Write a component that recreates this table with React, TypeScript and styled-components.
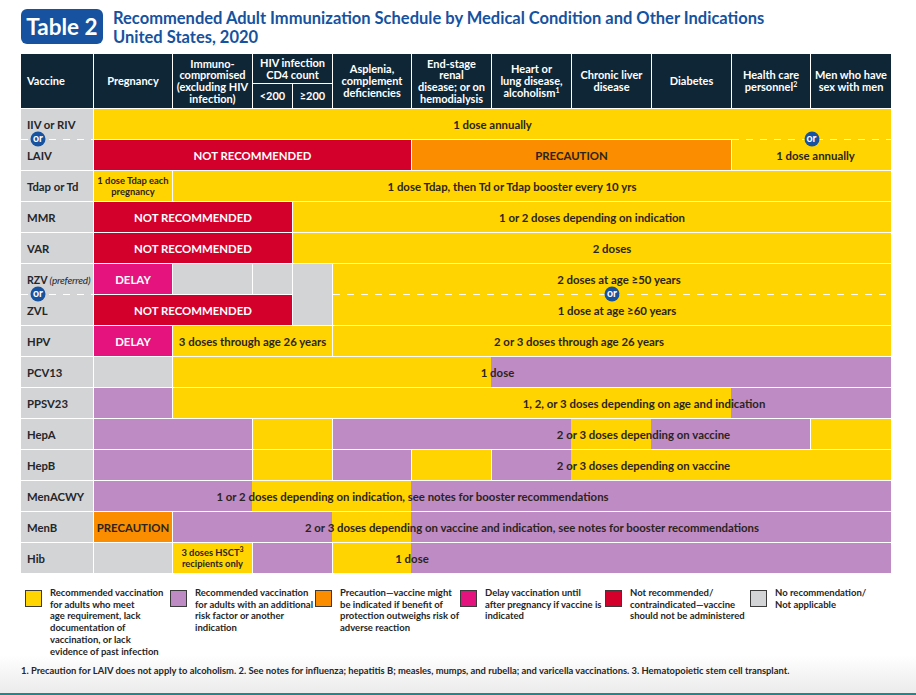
import React from 'react';
import styled, {createGlobalStyle} from 'styled-components';

type Tone = 'y' | 'p' | 'o' | 'r' | 'm' | 'g';

const tones: Record<Tone, string> = {
    y: '#ffd400',
    p: '#bf8bc5',
    o: '#fb8d00',
    r: '#d3002b',
    m: '#e4137d',
    g: '#d3d4d6'
};

const BLUE = '#1652a0';
const HEAD = '#0f2636';
const INK = '#2b241c';

const GlobalStyle = createGlobalStyle`
  html, body {
    margin: 0;
    padding: 0;
    background: #fff;
  }
  body {
    font-family: Lato, "Open Sans", sans-serif;
  }
  sup {
    font-size: 7px;
    line-height: 0;
    vertical-align: 4px;
  }
`;

const Page = styled.div`
  width: 916px;
  height: 695px;
  box-sizing: border-box;
  padding: 9px 25px 0 21px;
  display: flex;
  flex-direction: column;
  background: linear-gradient(to bottom, #fff 0, #fff 655px, #ebebeb 693px);
  border-bottom: 2px solid #1b8a8e;
`;

const TitleRow = styled.header`
  display: flex;
  align-items: flex-start;
  gap: 10px;
`;

const TableBadge = styled.div`
  width: 82px;
  height: 35px;
  border-radius: 6px;
  background: ${BLUE};
  color: #fff;
  font-weight: 700;
  font-size: 22.5px;
  display: flex;
  align-items: center;
  justify-content: center;
`;

const TitleText = styled.h1`
  margin: 0;
  color: ${BLUE};
  font-size: 16.5px;
  line-height: 19px;
  font-weight: 700;
`;

const Grid = styled.div`
  margin-top: 7px;
  display: grid;
  grid-template-columns: 72px 78px 79px 39px 39px 78px 79px 79px 79px 79px 78px 80px;
  grid-template-rows: 29px 24px repeat(15, 30px);
  gap: 1px;
  background: #fff;
  width: 870px;
`;

const Head = styled.div<{$col: string; $row: string; $left?: boolean}>`
  grid-column: ${p => p.$col};
  grid-row: ${p => p.$row};
  background: ${HEAD};
  color: #fff;
  font-weight: 700;
  font-size: 11px;
  line-height: 11.7px;
  display: flex;
  align-items: center;
  justify-content: ${p => (p.$left ? 'flex-start' : 'center')};
  text-align: ${p => (p.$left ? 'left' : 'center')};
  padding-left: ${p => (p.$left ? '6px' : '0')};
  white-space: nowrap;
`;

const Vaccine = styled.div<{$row: string}>`
  grid-column: 1 / 2;
  grid-row: ${p => p.$row};
  background: ${tones.g};
  color: #24262b;
  font-weight: 700;
  font-size: 11.3px;
  display: flex;
  align-items: center;
  padding-left: 6px;
  white-space: nowrap;
`;

const Small = styled.span`
  font-size: 10.6px;

  i {
    font-size: 10px;
    font-weight: 400;
    margin-left: 2px;
    letter-spacing: -0.2px;
  }
`;

const Cell = styled.div<{$tone: Tone; $col: string; $row: string; $join?: boolean; $pl?: number; $pr?: number; $small?: boolean}>`
  grid-column: ${p => p.$col};
  grid-row: ${p => p.$row};
  margin-left: ${p => (p.$join ? '-1px' : '0')};
  background: ${p => tones[p.$tone]};
  color: ${p => (p.$tone === 'r' || p.$tone === 'm' ? '#fff' : INK)};
  font-weight: 700;
  font-size: ${p => (p.$small ? '9.4px' : '11.4px')};
  line-height: ${p => (p.$small ? '11px' : '13px')};
  display: flex;
  align-items: center;
  justify-content: center;
  text-align: center;
  padding-left: ${p => p.$pl ?? 0}px;
  padding-right: ${p => p.$pr ?? 0}px;
  white-space: nowrap;
`;

const Label = styled.div<{$col: string; $row: string; $pl?: number; $pr?: number}>`
  grid-column: ${p => p.$col};
  grid-row: ${p => p.$row};
  z-index: 2;
  display: flex;
  align-items: center;
  justify-content: center;
  padding-left: ${p => p.$pl ?? 0}px;
  padding-right: ${p => p.$pr ?? 0}px;
  color: ${INK};
  font-weight: 700;
  font-size: 11.4px;
  white-space: nowrap;
  pointer-events: none;
`;

// dashed white rule laid over the 1px gap between two rows that read as one cell
const Divider = styled.div<{$tone: Tone; $col: string; $row: string; $badgeLeft?: boolean}>`
  grid-column: ${p => p.$col};
  grid-row: ${p => p.$row};
  align-self: start;
  margin-top: -1px;
  height: 1px;
  position: relative;
  z-index: 3;
  background: repeating-linear-gradient(90deg, #fff 0 7px, ${p => tones[p.$tone]} 7px 14px);

  &::after {
    content: 'or';
    position: absolute;
    top: 0;
    left: ${p => (p.$badgeLeft ? '17px' : '50%')};
    transform: translate(-50%, -50%);
    width: 15px;
    height: 15px;
    border-radius: 50%;
    background: ${BLUE};
    color: #fff;
    font-size: 10.5px;
    font-weight: 700;
    line-height: 13px;
    text-align: center;
  }
`;

const Legend = styled.div`
  margin-top: 17px;
  padding-left: 4px;
  display: grid;
  grid-template-columns: repeat(6, 145px);
`;

const LegendItem = styled.div`
  display: flex;
  align-items: flex-start;
  gap: 8px;
`;

const Swatch = styled.span<{$tone: Tone}>`
  flex: none;
  width: 15px;
  height: 15px;
  border: 1px solid #3b3b3b;
  background: ${p => tones[p.$tone]};
`;

const LegendText = styled.div`
  color: #262626;
  font-size: 9.5px;
  line-height: 11.7px;
  font-weight: 700;
  margin-top: -3px;
  white-space: nowrap;
`;

const Footnote = styled.p`
  margin: 8px 0 0 0;
  color: #262626;
  font-size: 9.4px;
  font-weight: 700;
  white-space: nowrap;
`;

const headers: {col: string; row: string; text: React.ReactNode; left?: boolean}[] = [
    {col: '1 / 2', row: '1 / 3', text: 'Vaccine', left: true},
    {col: '2 / 3', row: '1 / 3', text: 'Pregnancy'},
    {col: '3 / 4', row: '1 / 3', text: <>Immuno-<br/>compromised<br/>(excluding HIV<br/>infection)</>},
    {col: '4 / 6', row: '1 / 2', text: <>HIV infection<br/>CD4 count</>},
    {col: '4 / 5', row: '2 / 3', text: '<200'},
    {col: '5 / 6', row: '2 / 3', text: '≥200'},
    {col: '6 / 7', row: '1 / 3', text: <>Asplenia,<br/>complement<br/>deficiencies</>},
    {col: '7 / 8', row: '1 / 3', text: <>End-stage<br/>renal<br/>disease; or on<br/>hemodialysis</>},
    {col: '8 / 9', row: '1 / 3', text: <>Heart or<br/>lung disease,<br/>alcoholism<sup>1</sup></>},
    {col: '9 / 10', row: '1 / 3', text: <>Chronic liver<br/>disease</>},
    {col: '10 / 11', row: '1 / 3', text: 'Diabetes'},
    {col: '11 / 12', row: '1 / 3', text: <>Health care<br/>personnel<sup>2</sup></>},
    {col: '12 / 13', row: '1 / 3', text: <>Men who have<br/>sex with men</>}
];

const vaccines: [number, React.ReactNode][] = [
    [3, 'IIV or RIV'],
    [4, 'LAIV'],
    [5, 'Tdap or Td'],
    [6, 'MMR'],
    [7, 'VAR'],
    [8, <Small>RZV<i>(preferred)</i></Small>],
    [9, 'ZVL'],
    [10, 'HPV'],
    [11, 'PCV13'],
    [12, 'PPSV23'],
    [13, 'HepA'],
    [14, 'HepB'],
    [15, 'MenACWY'],
    [16, 'MenB'],
    [17, 'Hib']
];

type Seg = {tone: Tone; col: string; row: number | string; text?: React.ReactNode; join?: boolean; pl?: number; pr?: number; small?: boolean};

const NR = 'NOT RECOMMENDED';

const segments: Seg[] = [
    {tone: 'y', col: '2 / 13', row: 3, text: '1 dose annually'},

    {tone: 'r', col: '2 / 7', row: 4, text: NR},
    {tone: 'o', col: '7 / 11', row: 4, text: 'PRECAUTION'},
    {tone: 'y', col: '11 / 13', row: 4, text: '1 dose annually', pl: 8},

    {tone: 'y', col: '2 / 3', row: 5, text: <>1 dose Tdap each<br/>pregnancy</>, small: true},
    {tone: 'y', col: '3 / 13', row: 5, text: '1 dose Tdap, then Td or Tdap booster every 10 yrs', pr: 40},

    {tone: 'r', col: '2 / 5', row: 6, text: NR},
    {tone: 'y', col: '5 / 13', row: 6, text: '1 or 2 doses depending on indication'},

    {tone: 'r', col: '2 / 5', row: 7, text: NR},
    {tone: 'y', col: '5 / 13', row: 7, text: '2 doses', pl: 40},

    {tone: 'm', col: '2 / 3', row: 8, text: 'DELAY'},
    {tone: 'g', col: '3 / 4', row: 8},
    {tone: 'g', col: '4 / 5', row: 8},
    {tone: 'g', col: '5 / 6', row: '8 / 10'},
    {tone: 'y', col: '6 / 13', row: 8, text: '2 doses at age ≥50 years', pl: 14},

    {tone: 'r', col: '2 / 5', row: 9, text: NR},
    {tone: 'y', col: '6 / 13', row: 9, text: '1 dose at age ≥60 years', pl: 10},

    {tone: 'm', col: '2 / 3', row: 10, text: 'DELAY'},
    {tone: 'y', col: '3 / 6', row: 10, text: '3 doses through age 26 years'},
    {tone: 'y', col: '6 / 13', row: 10, text: '2 or 3 doses through age 26 years', pr: 66},

    {tone: 'g', col: '2 / 3', row: 11},
    {tone: 'y', col: '3 / 8', row: 11},
    {tone: 'p', col: '8 / 13', row: 11, join: true},

    {tone: 'p', col: '2 / 3', row: 12},
    {tone: 'y', col: '3 / 11', row: 12},
    {tone: 'p', col: '11 / 13', row: 12, join: true},

    {tone: 'p', col: '2 / 4', row: 13},
    {tone: 'y', col: '4 / 6', row: 13},
    {tone: 'p', col: '6 / 9', row: 13},
    {tone: 'y', col: '9 / 10', row: 13, join: true},
    {tone: 'p', col: '10 / 12', row: 13, join: true},
    {tone: 'y', col: '12 / 13', row: 13},

    {tone: 'p', col: '2 / 4', row: 14},
    {tone: 'y', col: '4 / 6', row: 14},
    {tone: 'p', col: '6 / 7', row: 14},
    {tone: 'y', col: '7 / 8', row: 14},
    {tone: 'p', col: '8 / 9', row: 14},
    {tone: 'y', col: '9 / 13', row: 14, join: true},

    {tone: 'p', col: '2 / 4', row: 15},
    {tone: 'y', col: '4 / 7', row: 15, join: true},
    {tone: 'p', col: '7 / 13', row: 15, join: true},

    {tone: 'o', col: '2 / 3', row: 16, text: 'PRECAUTION'},
    {tone: 'p', col: '3 / 6', row: 16},
    {tone: 'y', col: '6 / 7', row: 16, join: true},
    {tone: 'p', col: '7 / 13', row: 16, join: true},

    {tone: 'g', col: '2 / 3', row: 17},
    {tone: 'y', col: '3 / 4', row: 17, text: <>3 doses HSCT<sup>3</sup><br/>recipients only</>, small: true},
    {tone: 'p', col: '4 / 6', row: 17},
    {tone: 'y', col: '6 / 7', row: 17},
    {tone: 'p', col: '7 / 13', row: 17, join: true}
];

// text that runs across several coloured cells
const labels: {col: string; row: number; text: string; pl?: number; pr?: number}[] = [
    {col: '2 / 13', row: 11, text: '1 dose', pl: 10},
    {col: '6 / 13', row: 12, text: '1, 2, or 3 doses depending on age and indication', pl: 64},
    {col: '7 / 13', row: 13, text: '2 or 3 doses depending on vaccine', pr: 16},
    {col: '7 / 13', row: 14, text: '2 or 3 doses depending on vaccine', pr: 16},
    {col: '2 / 11', row: 15, text: '1 or 2 doses depending on indication, see notes for booster recommendations'},
    {col: '3 / 13', row: 16, text: '2 or 3 doses depending on vaccine and indication, see notes for booster recommendations'},
    {col: '6 / 8', row: 17, text: '1 dose'}
];

const legend: {tone: Tone; text: React.ReactNode}[] = [
    {tone: 'y', text: <>Recommended vaccination<br/>for adults who meet<br/>age requirement, lack<br/>documentation of<br/>vaccination, or lack<br/>evidence of past infection</>},
    {tone: 'p', text: <>Recommended vaccination<br/>for adults with an additional<br/>risk factor or another<br/>indication</>},
    {tone: 'o', text: <>Precaution—vaccine might<br/>be indicated if benefit of<br/>protection outweighs risk of<br/>adverse reaction</>},
    {tone: 'm', text: <>Delay vaccination until<br/>after pregnancy if vaccine is<br/>indicated</>},
    {tone: 'r', text: <>Not recommended/<br/>contraindicated—vaccine<br/>should not be administered</>},
    {tone: 'g', text: <>No recommendation/<br/>Not applicable</>}
];

export default function App() {
    return (
        <>
            <GlobalStyle/>
            <Page>
                <TitleRow>
                    <TableBadge>Table 2</TableBadge>
                    <TitleText>
                        Recommended Adult Immunization Schedule by Medical Condition and Other Indications<br/>
                        United States, 2020
                    </TitleText>
                </TitleRow>

                <Grid>
                    {headers.map((h, i) => (
                        <Head key={i} $col={h.col} $row={h.row} $left={h.left}><span>{h.text}</span></Head>
                    ))}
                    {vaccines.map(([row, name]) => (
                        <Vaccine key={row} $row={String(row)}><span>{name}</span></Vaccine>
                    ))}
                    {segments.map((s, i) => (
                        <Cell key={i} $tone={s.tone} $col={s.col} $row={String(s.row)}
                              $join={s.join} $pl={s.pl} $pr={s.pr} $small={s.small}>
                            {s.text && <span>{s.text}</span>}
                        </Cell>
                    ))}
                    {labels.map((l, i) => (
                        <Label key={i} $col={l.col} $row={String(l.row)} $pl={l.pl} $pr={l.pr}>{l.text}</Label>
                    ))}
                    <Divider $tone='g' $col='1 / 2' $row='4' $badgeLeft/>
                    <Divider $tone='y' $col='11 / 13' $row='4'/>
                    <Divider $tone='g' $col='1 / 2' $row='9' $badgeLeft/>
                    <Divider $tone='y' $col='6 / 13' $row='9'/>
                </Grid>

                <Legend>
                    {legend.map((l, i) => (
                        <LegendItem key={i}>
                            <Swatch $tone={l.tone}/>
                            <LegendText>{l.text}</LegendText>
                        </LegendItem>
                    ))}
                </Legend>

                <Footnote>
                    1. Precaution for LAIV does not apply to alcoholism. 2. See notes for influenza; hepatitis B; measles, mumps, and rubella; and varicella vaccinations. 3. Hematopoietic stem cell transplant.
                </Footnote>
            </Page>
        </>
    );
}
